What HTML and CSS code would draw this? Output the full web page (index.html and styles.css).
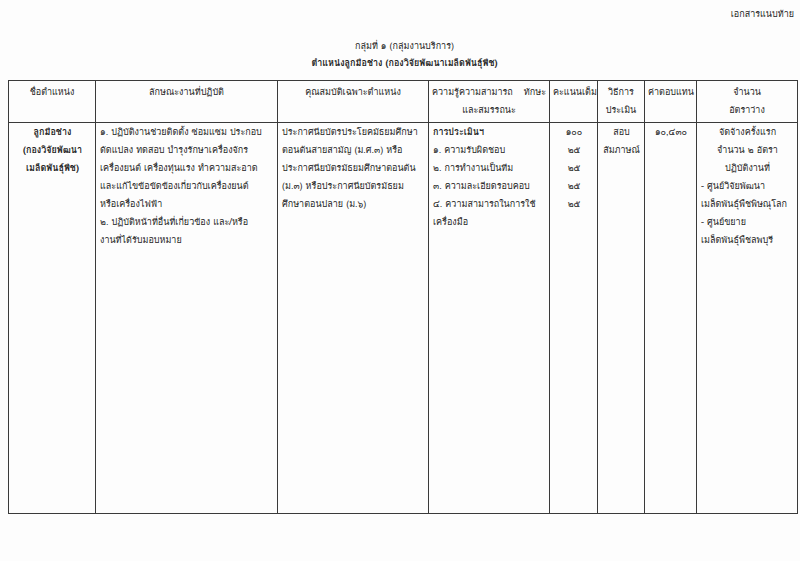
FILE: index.html
```html
<!DOCTYPE html>
<html lang="th">
<head>
<meta charset="utf-8">
<link rel="stylesheet" href="styles.css">
</head>
<body>
<div class="page">
  <div class="attach">เอกสารแนบท้าย</div>
  <div class="titles">
    <div class="t1">กลุ่มที่ ๑ (กลุ่มงานบริการ)</div>
    <div class="t2">ตำแหน่งลูกมือช่าง (กองวิจัยพัฒนาเมล็ดพันธุ์พืช)</div>
  </div>
  <table class="grid">
    <colgroup>
      <col class="c1"><col class="c2"><col class="c3"><col class="c4"><col class="c5"><col class="c6"><col class="c7"><col class="c8">
    </colgroup>
    <thead>
      <tr>
        <th>ชื่อตำแหน่ง</th>
        <th>ลักษณะงานที่ปฏิบัติ</th>
        <th>คุณสมบัติเฉพาะตำแหน่ง</th>
        <th><span class="just">ความรู้ความสามารถ ทักษะ</span>และสมรรถนะ</th>
        <th>คะแนนเต็ม</th>
        <th>วิธีการ<br>ประเมิน</th>
        <th>ค่าตอบแทน</th>
        <th>จำนวน<br>อัตราว่าง</th>
      </tr>
    </thead>
    <tbody>
      <tr>
        <td class="center bold">ลูกมือช่าง<br>(กองวิจัยพัฒนา<br>เมล็ดพันธุ์พืช)</td>
        <td>๑. ปฏิบัติงานช่วยติดตั้ง ซ่อมแซม ประกอบ<br>ดัดแปลง ทดสอบ บำรุงรักษาเครื่องจักร<br>เครื่องยนต์ เครื่องทุ่นแรง ทำความสะอาด<br>และแก้ไขข้อขัดข้องเกี่ยวกับเครื่องยนต์<br>หรือเครื่องไฟฟ้า<br>๒. ปฏิบัติหน้าที่อื่นที่เกี่ยวข้อง และ/หรือ<br>งานที่ได้รับมอบหมาย</td>
        <td>ประกาศนียบัตรประโยคมัธยมศึกษา<br>ตอนต้นสายสามัญ (ม.ศ.๓) หรือ<br>ประกาศนียบัตรมัธยมศึกษาตอนต้น<br>(ม.๓) หรือประกาศนียบัตรมัธยม<br>ศึกษาตอนปลาย (ม.๖)</td>
        <td><b>การประเมินฯ</b><br>๑. ความรับผิดชอบ<br>๒. การทำงานเป็นทีม<br>๓. ความละเอียดรอบคอบ<br>๔. ความสามารถในการใช้<br>เครื่องมือ</td>
        <td class="center">๑๐๐<br>๒๕<br>๒๕<br>๒๕<br>๒๕</td>
        <td class="center">สอบ<br>สัมภาษณ์</td>
        <td class="center">๑๐,๔๓๐</td>
        <td><div class="center">จัดจ้างครั้งแรก<br>จำนวน ๒ อัตรา<br>ปฏิบัติงานที่</div>- ศูนย์วิจัยพัฒนา<br>เมล็ดพันธุ์พืชพิษณุโลก<br>- ศูนย์ขยาย<br>เมล็ดพันธุ์พืชลพบุรี</td>
      </tr>
    </tbody>
  </table>
</div>
</body>
</html>
```
FILE: styles.css
```css
html, body {
  margin: 0;
  padding: 0;
  background: #fdfdfd;
}
body {
  font-family: "Loma", "Garuda", "Waree", "Norasi", "Tahoma", "Noto Sans Thai", "DejaVu Sans", sans-serif;
  font-size: 9px;
  color: #262626;
  width: 800px;
  height: 561px;
  overflow: hidden;
}
.page {
  padding: 6px 3px 0 8px;
}
.attach {
  text-align: right;
  padding-right: 3px;
  line-height: 16px;
}
.titles {
  margin-top: 16px;
  padding-left: 4px;
  text-align: center;
  line-height: 17px;
}
.t2 {
  font-weight: bold;
}
.grid {
  margin-top: 8px;
  border-collapse: collapse;
  width: 789px;
  table-layout: fixed;
}
.c1 { width: 87px; }
.c2 { width: 182px; }
.c3 { width: 151px; }
.c4 { width: 121px; }
.c5 { width: 48px; }
.c6 { width: 47px; }
.c7 { width: 52px; }
.c8 { width: 101px; }
.grid th, .grid td {
  border: 1px solid #3a3a3a;
  line-height: 18px;
  vertical-align: top;
  white-space: nowrap;
}
.grid th {
  font-weight: normal;
  text-align: center;
  padding: 2px 3px 1px;
  height: 38px;
}
.grid td {
  padding: 0 3px 0 4px;
  height: 390px;
  text-align: left;
}
.just {
  display: block;
  text-align: justify;
  text-align-last: justify;
}
.center { text-align: center !important; }
.bold { font-weight: bold; }
```
